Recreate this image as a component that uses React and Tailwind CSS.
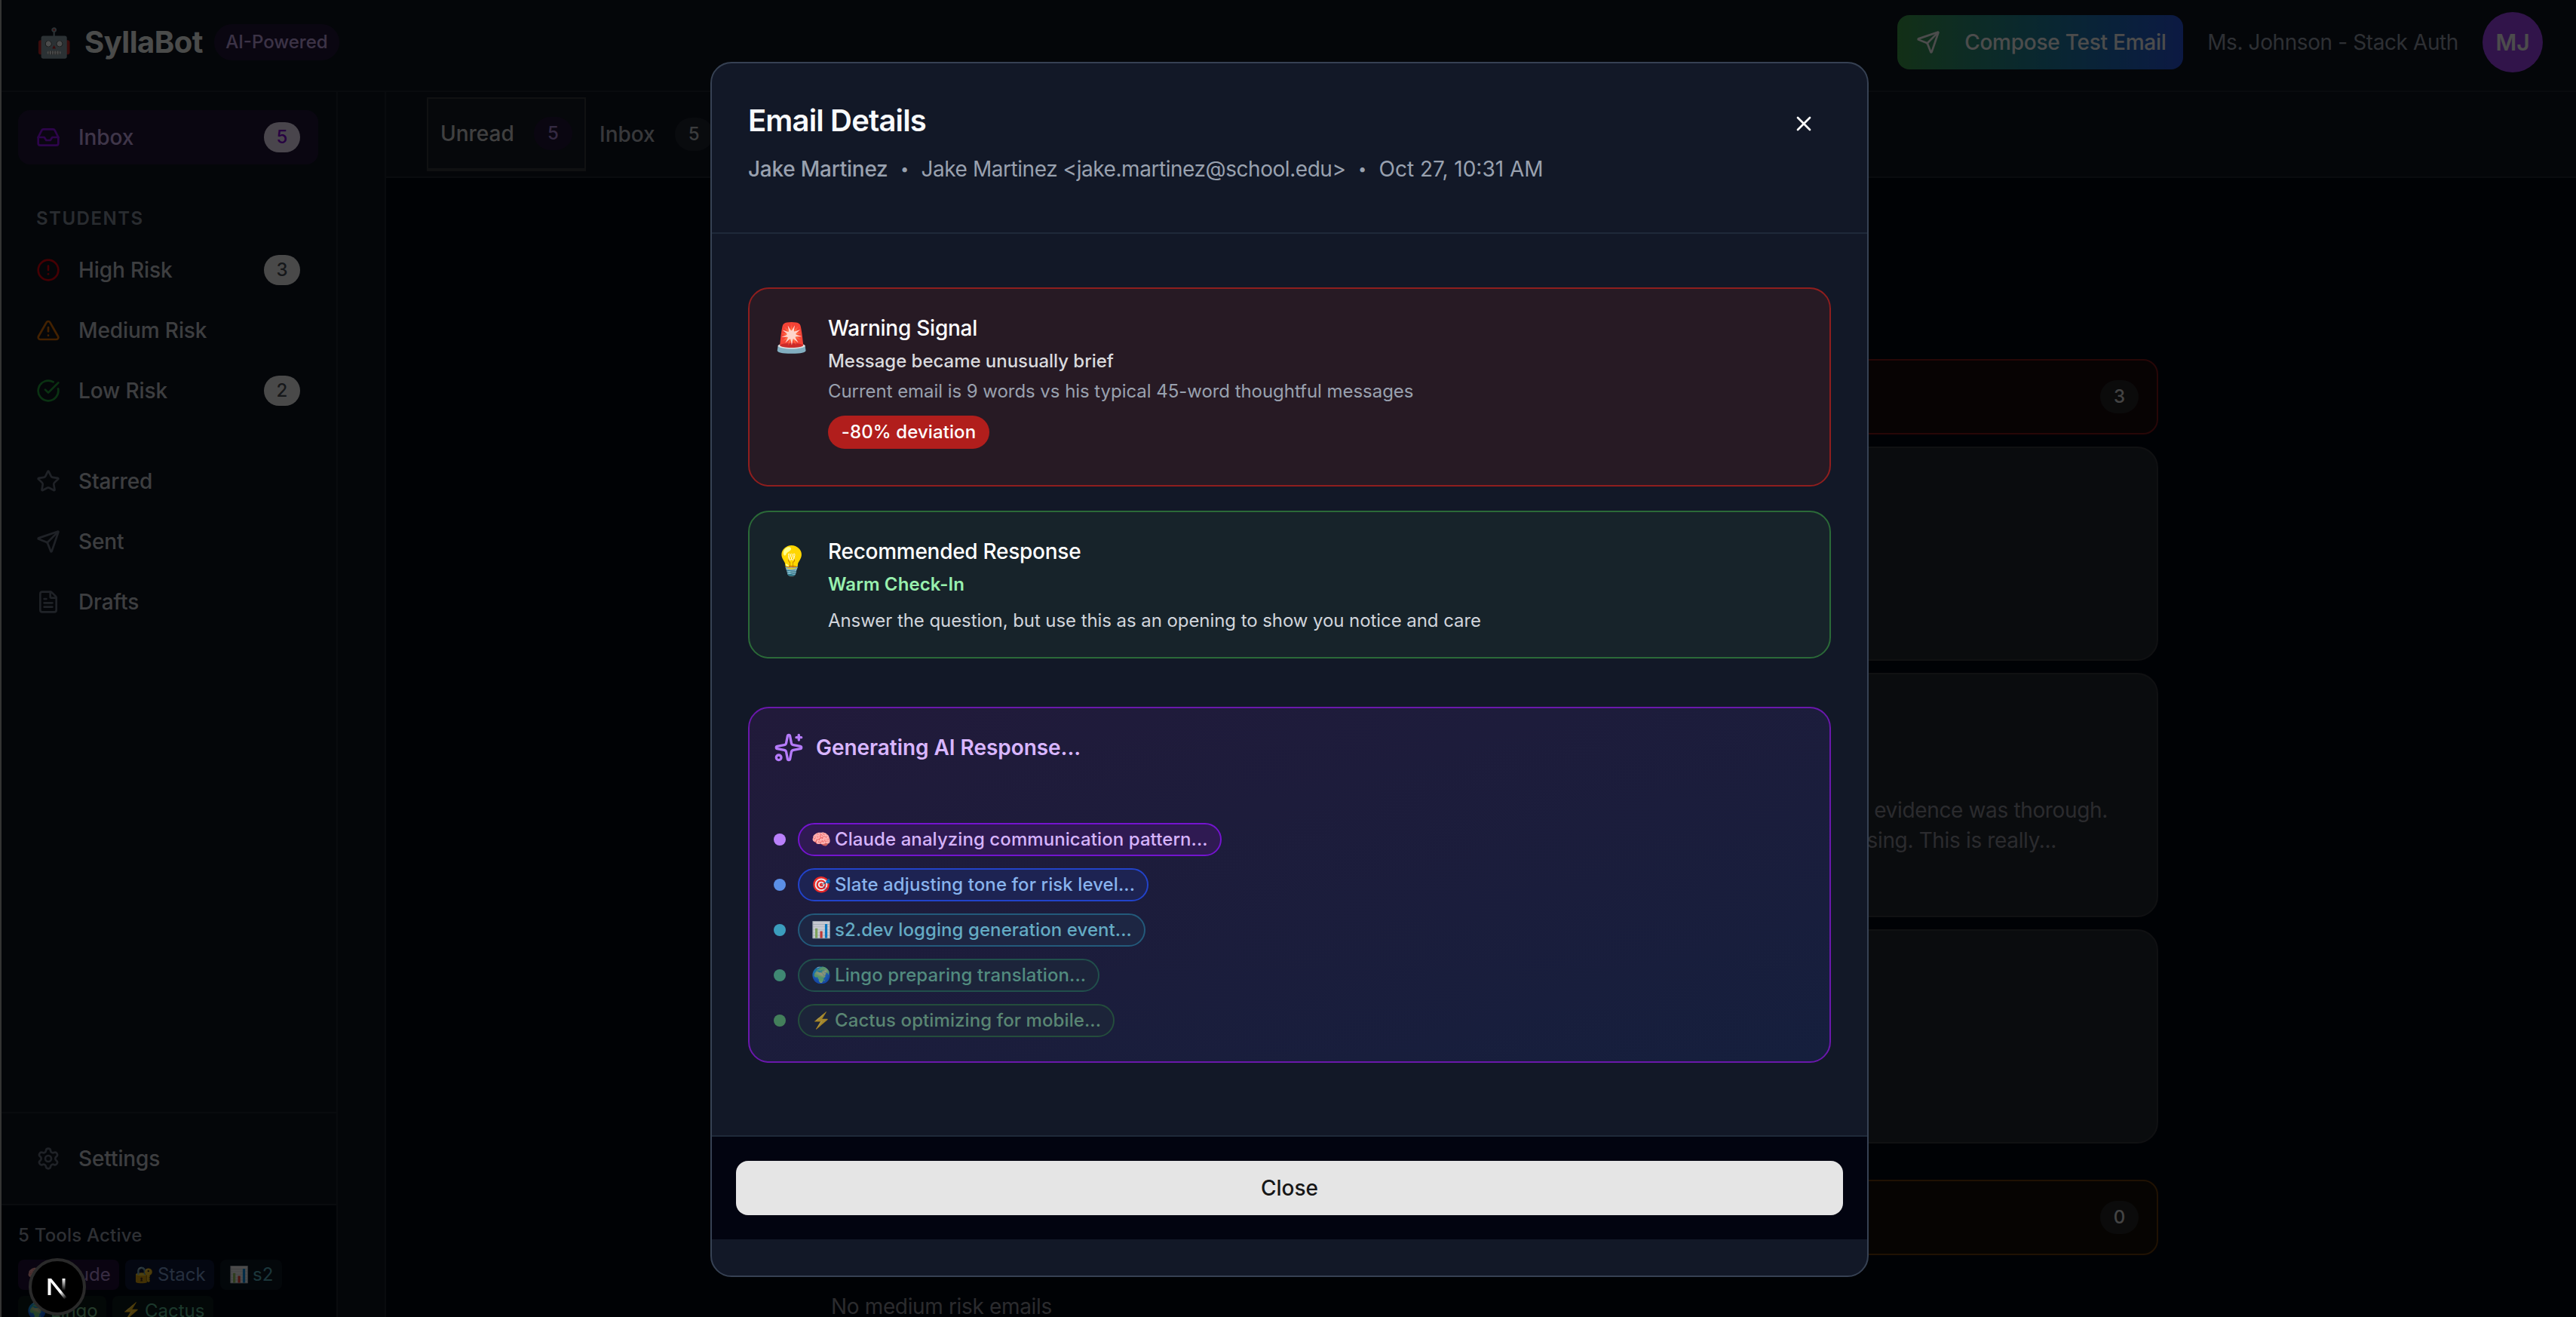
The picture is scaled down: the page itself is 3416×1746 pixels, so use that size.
import React from "react";
import { Inbox, CircleAlert, TriangleAlert, CircleCheckBig, Star, Send, FileText, Settings, X, Sparkles } from "lucide-react";

function NavItem({ icon, label, count, active }) {
  return (
    <div className={"flex h-[72px] items-center rounded-2xl px-6 " + (active ? "bg-[#24153b]" : "")}>
      {icon}
      <span className={"ml-6 text-[28px] leading-10 font-medium tracking-[-0.1px] " + (active ? "text-[#d4b6f6]" : "text-[#cdd1d8]")}>{label}</span>
      {count && (
        <span className={"ml-auto flex h-10 w-12 items-center justify-center rounded-[20px] text-2xl font-medium " + (active ? "bg-[#f3e8ff] text-[#8200db]" : "bg-[#f5f5f5] text-[#4b5059]")}>{count}</span>
      )}
    </div>
  );
}

function Emoji({ children, className }) {
  return <span className={"flex shrink-0 items-center justify-center whitespace-nowrap " + className}>{children}</span>;
}

function CountBadge({ children, className }) {
  return <span className={"flex h-11 w-[51px] items-center justify-center rounded-[22px] text-2xl font-medium " + className}>{children}</span>;
}

const STEPS = [
  { e: "🧠", t: "Claude analyzing communication pattern...", dot: "bg-[#b980fb]", chip: "bg-[#2f1a52] border-[#7414cf] text-[#d6b3fb]", o: "opacity-100" },
  { e: "🎯", t: "Slate adjusting tone for risk level...", dot: "bg-[#5b8fe6]", chip: "bg-[#1d2352] border-[#2243ca] text-[#88b3ed]", o: "opacity-90" },
  { e: "📊", t: "s2.dev logging generation event...", dot: "bg-[#3b9dbd]", chip: "bg-[#1d2643] border-[#235a7b] text-[#64abc4]", o: "opacity-75" },
  { e: "🌍", t: "Lingo preparing translation...", dot: "bg-[#3f8873]", chip: "bg-[#1c243a] border-[#214f4c] text-[#528b7f]", o: "opacity-60" },
  { e: "⚡", t: "Cactus optimizing for mobile...", dot: "bg-[#437f5b]", chip: "bg-[#1c2439] border-[#244d3c] text-[#5a8673]", o: "opacity-60" },
];

const TOOLS = [
  { e: "🧠", t: "Claude", c: "bg-[#240f3a] text-[#b794dc] w-[134px]" },
  { e: "🔐", t: "Stack", c: "bg-[#0e183a] text-[#7f9fd0] w-[118px]" },
  { e: "📊", t: "s2", c: "bg-[#0d1824] text-[#5ab4c2] w-[82px]" },
  { e: "🌍", t: "Lingo", c: "bg-[#0d1d1a] text-[#78c28c] w-[117px]" },
  { e: "⚡", t: "Cactus", c: "bg-[#0c1c1c] text-[#5cbc94] w-[134px]" },
];

function Background() {
  return (
    <div className="flex h-full grow flex-col">
      <header className="flex h-[122px] shrink-0 items-start justify-between border-b-2 border-[#1f2530] bg-[#0f1421] pt-4 pr-11 pl-[46px]">
        <div className="flex h-20 items-center">
          <Emoji className="h-14 w-12 text-[38px]">🤖</Emoji>
          <span className="ml-4 text-[40px] leading-[56px] font-bold tracking-[-0.5px] text-[#f8faf8]">SyllaBot</span>
          <span className="ml-[15px] flex h-12 w-[166px] items-center justify-center rounded-3xl bg-[#24153b] text-2xl font-medium text-[#c8acea]">AI-Powered</span>
        </div>
        <div className="flex h-20 items-center">
          <div className="flex h-[72px] w-[379px] items-center rounded-2xl bg-linear-to-r from-[#3fa04a] to-[#2b55e0] pl-[25px] text-white">
            <Send className="size-8" strokeWidth={2} />
            <span className="ml-8 text-[28px] font-medium tracking-[-0.25px] whitespace-nowrap">Compose Test Email</span>
          </div>
          <span className="ml-8 text-[28px] tracking-[-0.4px] whitespace-nowrap text-[#99a1af]">Ms. Johnson - Stack Auth</span>
          <div className="ml-8 flex size-20 items-center justify-center rounded-full bg-[#a544f8] text-[30px] font-semibold text-white">MJ</div>
        </div>
      </header>
      <div className="flex min-h-0 grow">
        <aside className="flex w-[446px] shrink-0 flex-col border-r-2 border-[#1f2530] bg-[#0f1421]">
          <nav className="flex grow flex-col gap-2 pt-6 pr-6 pl-[22px]">
            <NavItem active count="5" label="Inbox" icon={<Inbox className="size-8 text-[#9810fa]" />} />
            <div className="mt-12 mb-2 self-start pl-6 text-2xl leading-8 font-semibold tracking-[1.5px] text-[#8b93a0]">STUDENTS</div>
            <NavItem count="3" label="High Risk" icon={<CircleAlert className="size-8 text-[#e7000b]" />} />
            <NavItem label="Medium Risk" icon={<TriangleAlert className="size-8 text-[#e17100]" />} />
            <NavItem count="2" label="Low Risk" icon={<CircleCheckBig className="size-8 text-[#22a83c]" />} />
            <div className="mt-8" />
            <NavItem label="Starred" icon={<Star className="size-8 text-[#6a7282]" />} />
            <NavItem label="Sent" icon={<Send className="size-8 text-[#6a7282]" />} />
            <NavItem label="Drafts" icon={<FileText className="size-8 text-[#6a7282]" />} />
          </nav>
          <div className="h-[122px] shrink-0 border-t-2 border-[#1f2530] pt-6 pr-6 pl-[22px]">
            <NavItem label="Settings" icon={<Settings className="size-8 text-[#6a7282]" />} />
          </div>
          <div className="h-[150px] shrink-0 overflow-hidden border-t-2 border-[#1f2530] bg-[#030712] pt-6 pr-6 pl-[22px]">
            <div className="text-2xl leading-8 font-medium tracking-[0.2px] text-[#99a1af]">5 Tools Active</div>
            <div className="mt-4 flex flex-wrap gap-2">
              {TOOLS.map((s) => (
                <span key={s.t} className={"flex h-10 items-center rounded-lg pl-3 text-2xl " + s.c}>
                  <Emoji className="w-[26px] text-[21px]">{s.e}</Emoji>
                  <span className="ml-[5px]">{s.t}</span>
                </span>
              ))}
            </div>
          </div>
        </aside>
        <div className="w-[62px] shrink-0 bg-[#0f1421]" />
        <main className="flex grow flex-col border-l-2 border-[#1f2530] bg-[#030712]">
          <div className="flex h-[114px] shrink-0 items-center border-b-2 border-[#1f2530] bg-[#0f1421] pl-[54px]">
            <div className="flex h-[98px] w-[211px] items-center justify-between border-2 border-b-4 border-[#37393f] bg-[#171b26] pr-4 pl-4">
              <span className="text-[28px] font-medium text-[#d8d8d8]">Unread</span>
              <CountBadge className="bg-[#24153b] text-[#b08cdc]">5</CountBadge>
            </div>
            <span className="ml-[18px] text-[28px] font-medium text-[#b9bcc4]">Inbox</span>
            <CountBadge className="ml-[26px] bg-[#1f2530] text-[#c5c8ce]">5</CountBadge>
          </div>
          <div className="flex grow flex-col overflow-hidden pt-60 pl-[558px]">
            <div className="flex h-[100px] w-[1792px] shrink-0 items-center justify-end rounded-[20px] border-2 border-[#82181a] bg-[#190a0d] pr-6">
              <CountBadge className="bg-[#262626] text-[#e5e5e5]">3</CountBadge>
            </div>
            <div className="mt-4 h-[284px] w-[1792px] shrink-0 rounded-[28px] border-2 border-[#36393f] bg-[#242831]" />
            <div className="mt-4 h-[324px] w-[1792px] shrink-0 rounded-[28px] border-2 border-[#36393f] bg-[#242831] pt-[160px] pl-8 text-[28px] leading-10 tracking-[-0.35px] whitespace-nowrap text-[#8f9299]">
              <div className="w-[1691px] text-right">evidence was thorough.</div>
              <div className="w-[1623px] text-right">increasing. This is really...</div>
            </div>
            <div className="mt-4 h-[284px] w-[1792px] shrink-0 rounded-[28px] border-2 border-[#36393f] bg-[#242831]" />
            <div className="mt-12 flex h-[100px] w-[1792px] shrink-0 items-center justify-end rounded-[20px] border-2 border-[#6b3d0a] bg-[#161008] pr-6">
              <CountBadge className="bg-[#262626] text-[#e5e5e5]">0</CountBadge>
            </div>
            <div className="mt-12 pl-8 text-[28px] leading-10 tracking-[-0.35px] text-[#8f9299]">No medium risk emails</div>
          </div>
        </main>
      </div>
    </div>
  );
}

function Bullet() {
  return <span className="flex w-3 justify-center text-[20px]">•</span>;
}

function Modal() {
  return (
    <section className="flex h-[1611px] w-[1536px] flex-col overflow-hidden rounded-[28px] border-2 border-[#364153] bg-[#121827]">
      <div className="flex h-[226px] shrink-0 items-start justify-between border-b-2 border-[#1e2939] pt-12 pr-[68px] pl-12">
        <div>
          <h2 className="text-[40px] leading-[56px] font-semibold tracking-[-0.85px] text-[#f8fafc]">Email Details</h2>
          <div className="mt-4 flex items-center gap-4 text-[28px] leading-10 whitespace-nowrap text-[#99a1af]">
            <span className="font-medium tracking-[-0.25px]">Jake Martinez</span>
            <Bullet />
            <span className="tracking-[-0.45px]">Jake Martinez &lt;jake.martinez@school.edu&gt;</span>
            <Bullet />
            <span>Oct 27, 10:31 AM</span>
          </div>
        </div>
        <X className="mt-4 size-8 text-white" />
      </div>
      <div className="flex grow flex-col px-12 pt-[71px]">
        <div className="flex h-[264px] shrink-0 gap-6 rounded-[28px] border-2 border-[#8f1e1e] bg-[#271a24] p-8">
          <Emoji className="h-16 w-12 text-[38px]">🚨</Emoji>
          <div>
            <div className="text-[28px] leading-10 font-medium tracking-[-0.25px] text-white">Warning Signal</div>
            <div className="mt-2 text-2xl leading-8 font-medium tracking-[-0.03px] text-[#d9dade]">Message became unusually brief</div>
            <div className="mt-2 text-2xl leading-8 tracking-[-0.05px] text-[#99a1af]">Current email is 9 words vs his typical 45-word thoughtful messages</div>
            <span className="mt-4 flex h-11 w-[214px] items-center justify-center rounded-[22px] bg-[#b11e1c] text-2xl font-medium tracking-[0.1px] text-white">-80% deviation</span>
          </div>
        </div>
        <div className="mt-8 flex h-[196px] shrink-0 gap-6 rounded-[28px] border-2 border-[#2b6a38] bg-[#17232a] p-8">
          <Emoji className="h-16 w-12 text-[38px]">💡</Emoji>
          <div>
            <div className="text-[28px] leading-10 font-medium tracking-[-0.27px] text-white">Recommended Response</div>
            <div className="mt-2 text-2xl leading-8 font-semibold tracking-[0.1px] text-[#98f0ae]">Warm Check-In</div>
            <div className="mt-4 text-2xl leading-8 tracking-[-0.07px] text-[#d1d5dc]">Answer the question, but use this as an opening to show you notice and care</div>
          </div>
        </div>
        <div className="mt-16 h-[472px] shrink-0 rounded-[28px] border-2 border-[#6a18ac] bg-linear-to-br from-[#211a3a] to-[#151f3d] p-8">
          <div className="flex h-10 items-center">
            <Sparkles className="size-10 text-[#b57bfb]" />
            <span className="ml-4 text-[28px] leading-10 font-semibold tracking-[-0.05px] text-[#d9b6ff]">Generating AI Response...</span>
          </div>
          <div className="mt-20 flex flex-col gap-4">
            {STEPS.map((s) => (
              <div key={s.t} className="flex h-11 items-center gap-4">
                <span className={"size-4 rounded-full " + s.dot} />
                <span className={"flex h-11 items-center rounded-[22px] border-2 px-4 text-2xl font-medium tracking-[0.085px] whitespace-nowrap " + s.chip}>
                  <Emoji className={"mr-[5px] w-[26px] text-[21px] " + s.o}>{s.e}</Emoji>
                  {s.t}
                </span>
              </div>
            ))}
          </div>
        </div>
      </div>
      <div className="mb-12 shrink-0 border-t-2 border-[#1e2939] bg-[#020410] p-8">
        <button className="flex h-[72px] w-full items-center justify-center rounded-2xl bg-[#e5e5e5] text-[28px] font-medium text-[#171717]">Close</button>
      </div>
    </section>
  );
}

function DevBadge() {
  return (
    <div className="absolute top-[1668px] left-[38px] flex size-[76px] items-center justify-center rounded-full border-4 border-[#2a2a2a] bg-black">
      <svg viewBox="0 0 26 30" className="h-[30px] w-[26px] overflow-visible">
        <defs>
          <linearGradient id="nd" x1="13" y1="17" x2="24" y2="31" gradientUnits="userSpaceOnUse">
            <stop offset="0.35" stopColor="#fff" />
            <stop offset="1" stopColor="#fff" stopOpacity="0" />
          </linearGradient>
          <linearGradient id="nv" x1="0" y1="4" x2="0" y2="20" gradientUnits="userSpaceOnUse">
            <stop stopColor="#fff" />
            <stop offset="1" stopColor="#fff" stopOpacity="0" />
          </linearGradient>
        </defs>
        <rect x="0.5" y="4" width="4" height="22" fill="#fff" />
        <polygon points="0.5,4 5,4 25.5,29 22.5,31.5" fill="url(#nd)" />
        <rect x="19.5" y="4" width="4" height="16" fill="url(#nv)" />
      </svg>
    </div>
  );
}

export default function App() {
  return (
    <div className="relative h-[1746px] w-full overflow-hidden bg-[#030712] font-['Inter','Noto_Color_Emoji',sans-serif]">
      <div className="flex h-full">
        <div className="w-[2px] shrink-0 bg-[#b0b0b0]" />
        <Background />
      </div>
      <div className="absolute inset-0 bg-black/70 pt-[82px] pl-[942px]">
        <Modal />
      </div>
      <DevBadge />
    </div>
  );
}
